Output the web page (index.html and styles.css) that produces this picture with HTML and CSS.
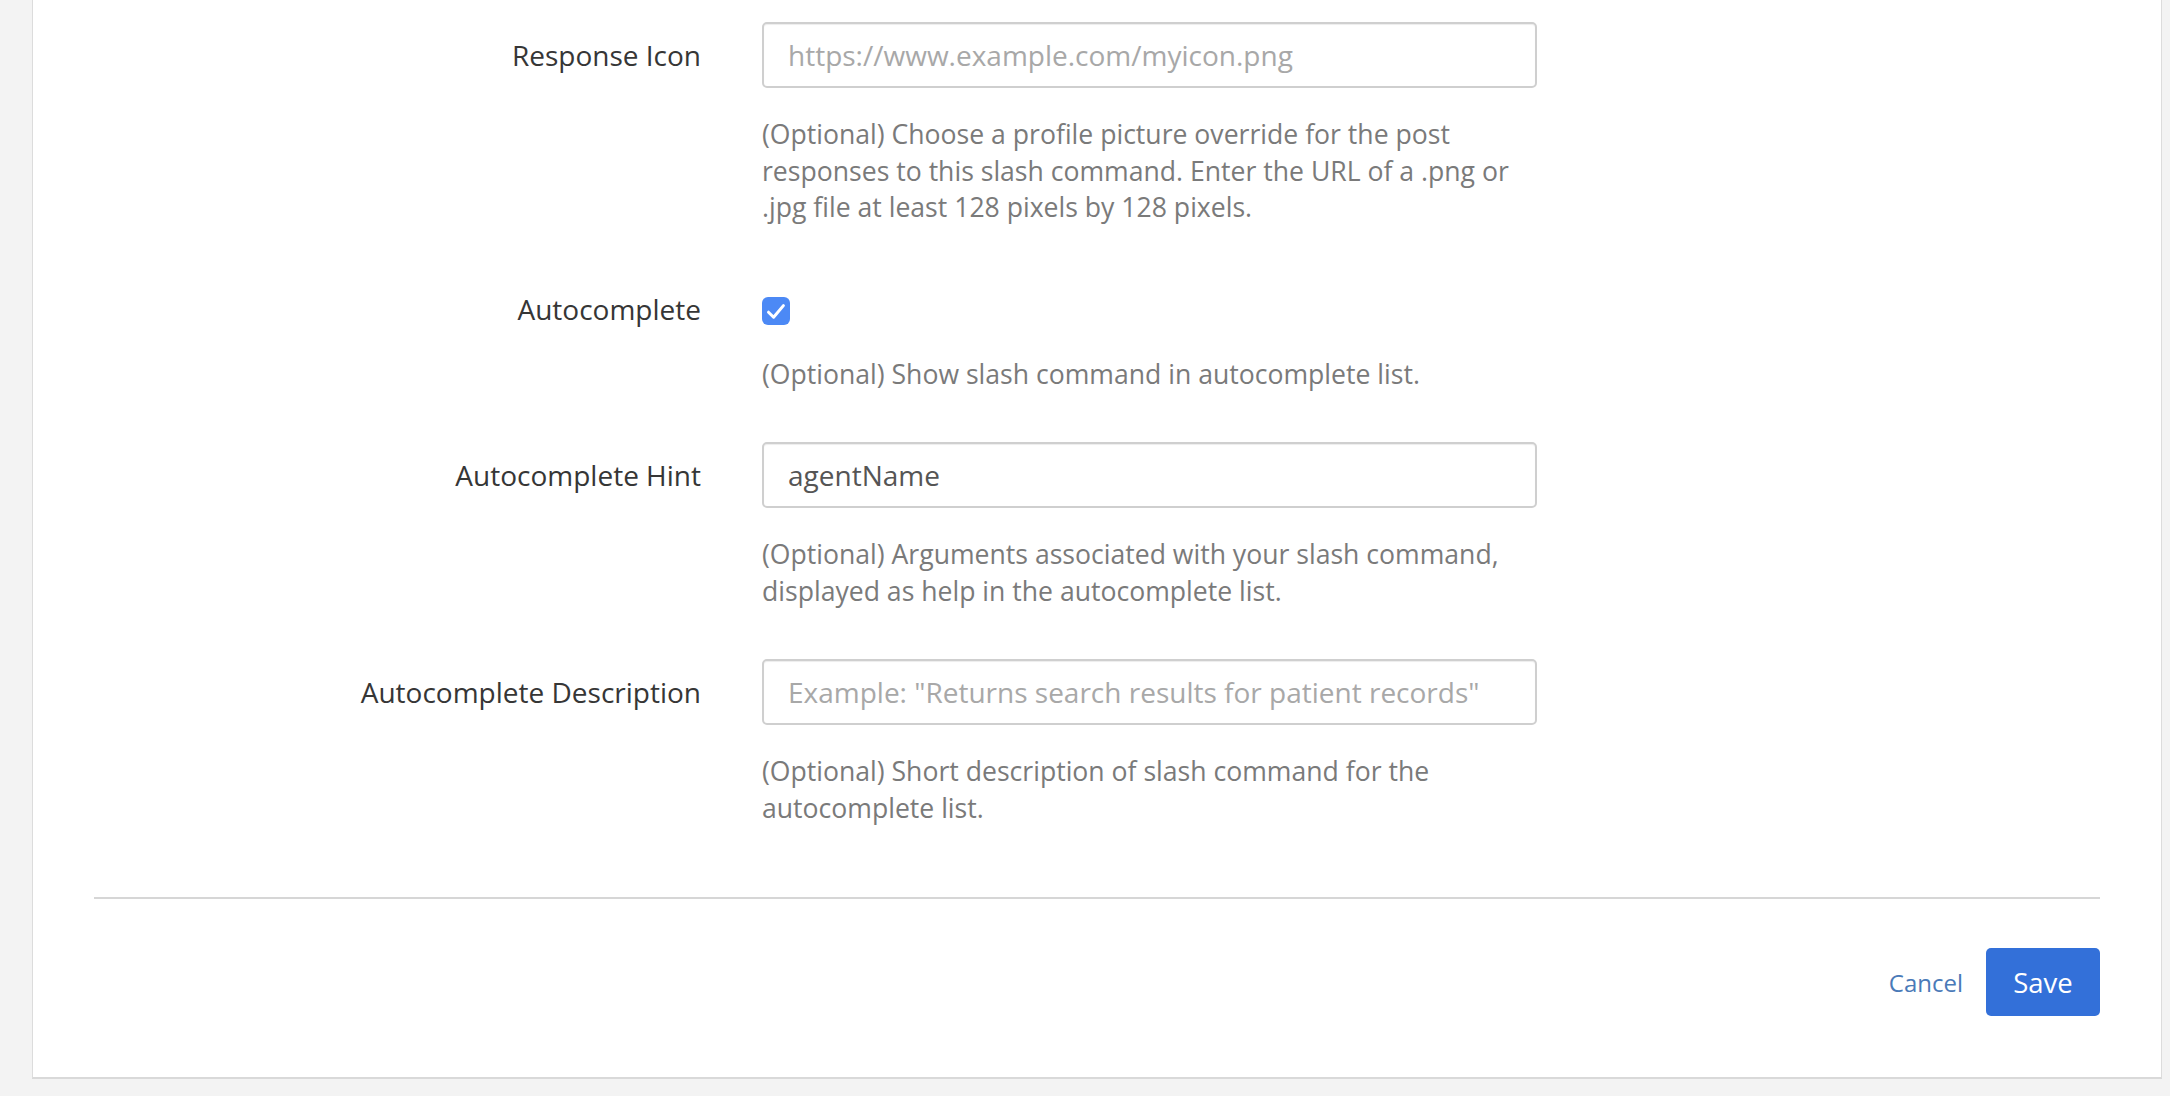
FILE: index.html
```html
<!DOCTYPE html>
<html lang="en">
<head>
<meta charset="utf-8">
<title>Slash Command</title>
<link rel="stylesheet" href="styles.css">
</head>
<body>
<div class="page">
  <div class="panel">
    <form class="form">
      <div class="group">
        <label class="label">Response Icon</label>
        <div class="control">
          <input class="input" type="text" placeholder="https://www.example.com/myicon.png">
          <div class="help">(Optional) Choose a profile picture override for the post responses to this slash command. Enter the URL of a .png or .jpg file at least 128 pixels by 128 pixels.</div>
        </div>
      </div>
      <div class="group">
        <label class="label">Autocomplete</label>
        <div class="control">
          <div class="check-row">
            <span class="checkbox">
              <svg viewBox="0 0 28 28" width="28" height="28"><path d="M6.5 15.2 L11.6 20.2 L21.4 8.6" fill="none" stroke="#fff" stroke-width="3" stroke-linecap="round" stroke-linejoin="round"/></svg>
            </span>
          </div>
          <div class="help">(Optional) Show slash command in autocomplete list.</div>
        </div>
      </div>
      <div class="group">
        <label class="label">Autocomplete Hint</label>
        <div class="control">
          <input class="input" type="text" value="agentName">
          <div class="help">(Optional) Arguments associated with your slash command, displayed as help in the autocomplete list.</div>
        </div>
      </div>
      <div class="group">
        <label class="label">Autocomplete Description</label>
        <div class="control">
          <input class="input" type="text" placeholder="Example: &quot;Returns search results for patient records&quot;">
          <div class="help">(Optional) Short description of slash command for the autocomplete list.</div>
        </div>
      </div>
    </form>
    <div class="footer">
      <a class="cancel" href="#">Cancel</a>
      <button class="save" type="button">Save</button>
    </div>
  </div>
</div>
</body>
</html>
```
FILE: styles.css
```css
html, body {
  margin: 0;
  padding: 0;
  background: #f3f3f3;
  font-family: "Open Sans", "Liberation Sans", sans-serif;
}

.page {
  height: 1096px;
  padding: 0 8px 18px 32px;
  box-sizing: border-box;
  overflow: hidden;
}

.panel {
  background: #fff;
  border: 1px solid #dcdcdc;
  border-top: none;
  border-bottom: 2px solid #d9d9d9;
  padding: 0 61px;
}

.form {
  display: flex;
  flex-direction: column;
  gap: 50px;
  padding: 22px 0 71px;
}

.group {
  display: flex;
  align-items: flex-start;
}

.label {
  width: 607px;
  flex: none;
  text-align: right;
  font-size: 28px;
  line-height: 66px;
  color: #363636;
  margin-right: 61px;
}

.control {
  width: 775px;
  flex: none;
}

.input {
  display: block;
  width: 775px;
  height: 66px;
  box-sizing: border-box;
  border: 2px solid #cfcfcf;
  border-radius: 5px;
  box-shadow: inset 0 1px 1px rgba(0, 0, 0, 0.075);
  padding: 0 24px;
  font-family: "Open Sans", "Liberation Sans", sans-serif;
  font-size: 28px;
  color: #555;
  background: #fff;
  outline: none;
}

.input::placeholder {
  color: #a8a8a8;
}

.check-row {
  height: 52px;
  padding-top: 21px;
  box-sizing: border-box;
}

.checkbox {
  display: block;
  width: 28px;
  height: 28px;
  border-radius: 6px;
  background: #4c89f5;
}

.checkbox svg {
  display: block;
}

.help {
  margin-top: 28px;
  font-size: 26.6px;
  line-height: 36.5px;
  color: #7a7a7a;
}

.footer {
  border-top: 2px solid #d6d6d6;
  padding: 49px 0 61px;
  display: flex;
  justify-content: flex-end;
  align-items: center;
  gap: 23px;
}

.cancel {
  font-size: 24px;
  color: #4a7ab8;
  text-decoration: none;
}

.save {
  width: 114px;
  height: 68px;
  border: none;
  border-radius: 5px;
  background: #3370d9;
  color: #fff;
  font-family: "Open Sans", "Liberation Sans", sans-serif;
  font-size: 27.5px;
  padding: 0;
}
```
